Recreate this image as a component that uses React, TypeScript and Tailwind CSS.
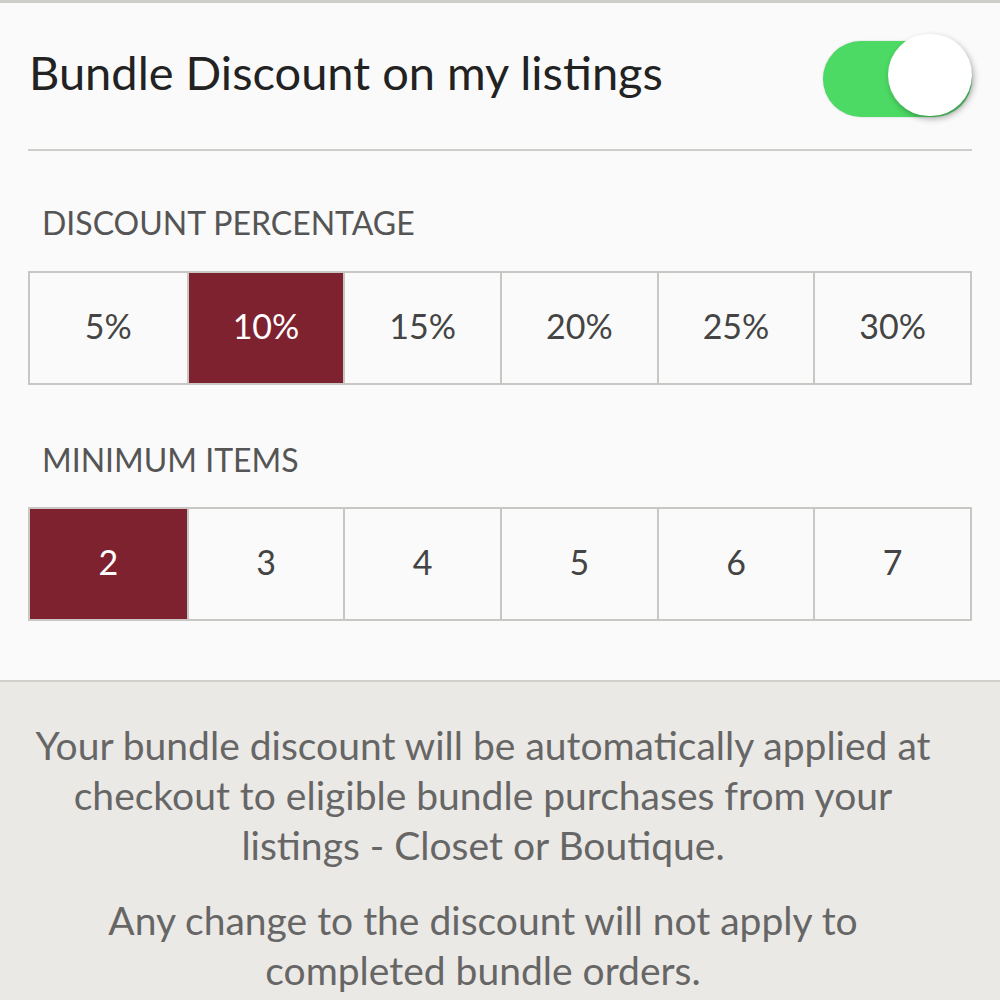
const percents = ['5%', '10%', '15%', '20%', '25%', '30%'];
const items = ['2', '3', '4', '5', '6', '7'];

function Segmented({ options, selected }: { options: string[]; selected: number }) {
  return (
    <div className="grid grid-cols-6 border-2 border-[#c9c7c3] mx-[28px]">
      {options.map((o, i) => (
        <div
          key={o}
          className={
            'h-[110px] flex items-center justify-center pb-[5px] text-[34px] ' +
            (i > 0 ? 'border-l-2 border-[#c9c7c3] ' : '') +
            (i === selected ? 'bg-[#7f2230] text-white' : 'text-[#444]')
          }
        >
          {o}
        </div>
      ))}
    </div>
  );
}

export default function App() {
  return (
    <div className="w-[1000px] h-[1000px] overflow-hidden bg-[#fafafa] font-['Lato',sans-serif]">
      <div className="border-t-[3px] border-[#cfcdc9]">
        <div className="flex items-center justify-between pl-[29px] pr-[28px] h-[146px]">
          <div className="text-[47px] leading-[50px] text-[#222] mb-[8px]">Bundle Discount on my listings</div>
          <div className="relative w-[149px] h-[76px] rounded-full bg-[#4cd964] shadow-[0_0_2px_rgba(0,0,0,0.2)] mt-[6px]">
            <div className="absolute right-[0px] top-[-7px] w-[84px] h-[82px] rounded-full bg-white shadow-[2px_3px_6px_rgba(0,0,0,0.3)]" />
          </div>
        </div>
        <div className="mx-[28px] h-[2px] bg-[#cfcdc9]" />
        <div className="pl-[42px] pt-[52px] pb-[28px] text-[32px] leading-[40px] text-[#555]">DISCOUNT PERCENTAGE</div>
        <Segmented options={percents} selected={1} />
        <div className="pl-[42px] pt-[55px] pb-[27px] text-[32px] leading-[40px] text-[#555]">MINIMUM ITEMS</div>
        <Segmented options={items} selected={0} />
        <div className="h-[59px]" />
        <div className="border-t-2 border-[#d3d0cb] bg-[#ebe9e5] h-[400px] pt-[38px] pr-[34px] text-center text-[39px] leading-[50px] text-[#666]">
          <p>
            Your bundle discount will be automatically applied at
            <br />
            checkout to eligible bundle purchases from your
            <br />
            listings - Closet or Boutique.
          </p>
          <p className="mt-[25px]">
            Any change to the discount will not apply to
            <br />
            completed bundle orders.
          </p>
        </div>
      </div>
    </div>
  );
}
